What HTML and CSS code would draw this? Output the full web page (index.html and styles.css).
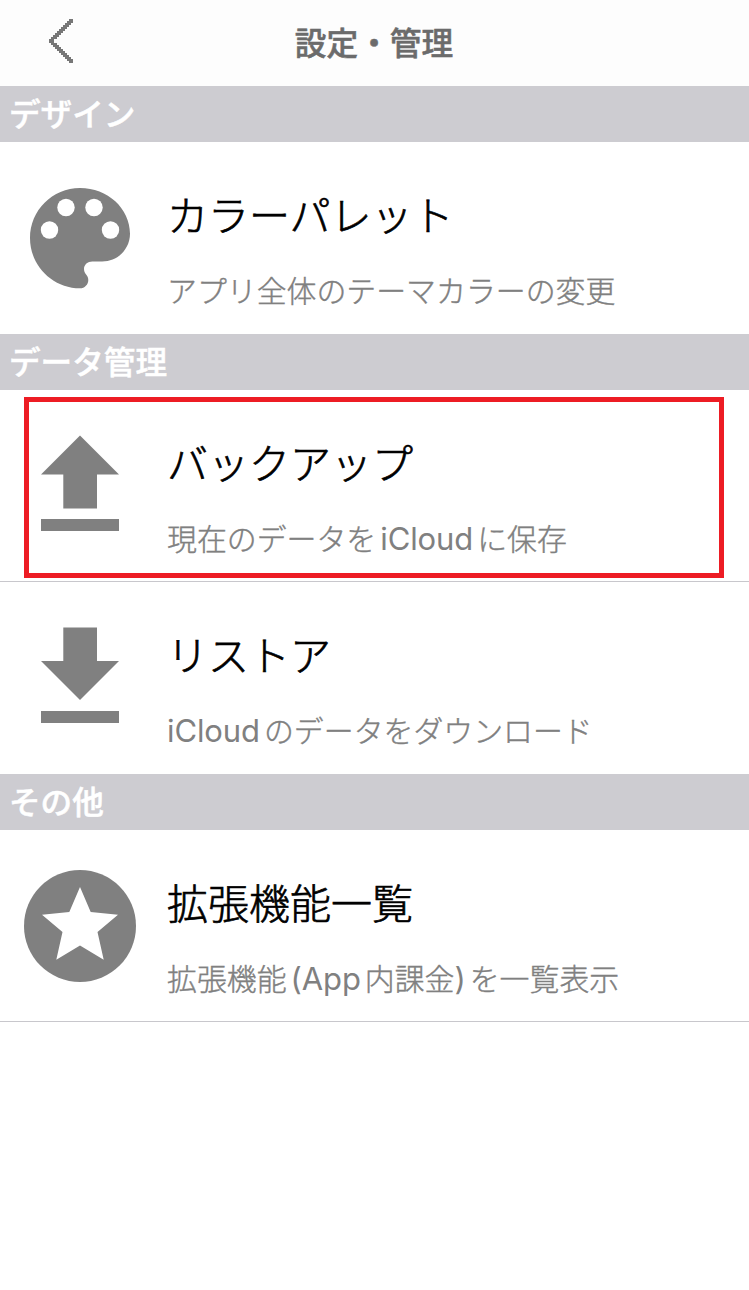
FILE: index.html
```html
<!DOCTYPE html>
<html lang="ja">
<head>
<meta charset="utf-8">
<title>設定・管理</title>
<link rel="stylesheet" href="styles.css">
</head>
<body>
<header class="nav">
  <svg class="back" viewBox="0 0 26 46"><path d="M21 2h4m-6 2h6m-8 2h6m-8 2h6m-8 2h6m-8 2h6m-8 2h6m-8 2h6m-8 2h6m-8 2h6m-8 2h5m-5 2h5m-3 2h6m-4 2h6m-4 2h6m-4 2h6m-4 2h6m-4 2h6m-4 2h6m-4 2h6m-4 2h6m-4 2h4"/></svg>
  <h1 class="nav-title">設定・管理</h1>
</header>
<main>
  <h2 class="section">デザイン</h2>
  <div class="row">
    <svg class="icon" viewBox="0 0 112 112"><path d="M56 6C28.400 6 6 28.400 6 56s22.400 50.300 50 50.300c4.600 0 8.300-3.700 8.300-8.300 0-2.200-.8-4.100-2.200-5.600-1.300-1.500-2.100-3.400-2.100-5.500 0-4.300 3.700-7.400 8.300-7.400h9.900c15.400 0 27.800-12.400 27.800-27.700C106 26.400 83.600 6 56 6Z"/><g class="holes"><circle cx="25.500" cy="48" r="8.700"/><circle cx="42" cy="25.500" r="8.700"/><circle cx="70" cy="25.500" r="8.700"/><circle cx="86.500" cy="48" r="8.700"/></g></svg>
    <div class="text"><h3 class="title">カラーパレット</h3><p class="desc">アプリ全体のテーマカラーの変更</p></div>
  </div>
  <h2 class="section">データ管理</h2>
  <div class="row divided">
    <svg class="icon" viewBox="0 0 112 112"><path d="M56 5.500 95 44.500H73V78.500H39.300V44.500H17ZM17 89H95V101H17Z"/></svg>
    <div class="text"><h3 class="title">バックアップ</h3><p class="desc">現在のデータを<span class="latin">iCloud</span>に保存</p></div>
    <div class="highlight"></div>
  </div>
  <div class="row">
    <svg class="icon" viewBox="0 0 112 112"><path d="M39.300 5.500H73V39H95L56 78 17 39H39.300ZM17 89H95V101H17Z"/></svg>
    <div class="text"><h3 class="title">リストア</h3><p class="desc"><span class="latin first">iCloud</span>のデータをダウンロード</p></div>
  </div>
  <h2 class="section">その他</h2>
  <div class="row divided">
    <svg class="icon" viewBox="0 0 112 112"><circle cx="56" cy="56" r="56"/><path class="holes" d="M56 17 66.700 42 94 44.700 73.500 62 79.700 89.700 56 75.500 32.300 89.700 38.500 62 18 44.700 45.300 42Z"/></svg>
    <div class="text"><h3 class="title">拡張機能一覧</h3><p class="desc">拡張機能<span class="latin">(App</span>内課金<span class="latin close">)</span>を一覧表示</p></div>
  </div>
</main>
</body>
</html>
```
FILE: styles.css
```css
* { box-sizing: border-box; margin: 0; padding: 0; }
body { background: #fff; font-family: "Noto Sans CJK JP", sans-serif; color: #000; }
.nav { position: relative; height: 86px; display: flex; justify-content: center; background: #fdfdfd; }
.back { position: absolute; left: 48px; top: 18px; width: 26px; height: 46px; fill: none; stroke: #777; stroke-width: 2; }
.nav-title { margin-left: -1px; font-size: 31.700px; line-height: 82px; font-weight: 500; color: #6b6b6b; -webkit-text-stroke: .5px #6b6b6b; }
.section { height: 56px; padding-left: 9px; background: #cdccd1; color: #fff; font-size: 31.600px; line-height: 52px; font-weight: 500; -webkit-text-stroke: .5px #fff; }
.row { position: relative; height: 192px; display: flex; padding: 40px 24px 0; }
.divided { border-bottom: 1px solid #c8c7cc; }
.icon { flex: none; width: 112px; height: 112px; fill: #808080; }
.holes { fill: #fff; }
.text { margin-left: 31px; white-space: nowrap; }
.title { font-size: 41px; line-height: 62px; font-weight: 300; -webkit-text-stroke: .7px #000; }
.desc { margin-top: 23px; font-size: 29.900px; line-height: 44px; font-weight: 300; color: #808080; -webkit-text-stroke: .4px #808080; }
.latin { font-family: Inter, sans-serif; font-size: 31px; font-weight: 400; margin: 0 4px; letter-spacing: -.1px; -webkit-text-stroke: 0; }
.first { margin-left: 0; }
.close { margin-left: 0; }
.highlight { position: absolute; left: 24px; top: 7px; width: 700px; height: 181px; border: 5px solid #ed1c24; }
```
